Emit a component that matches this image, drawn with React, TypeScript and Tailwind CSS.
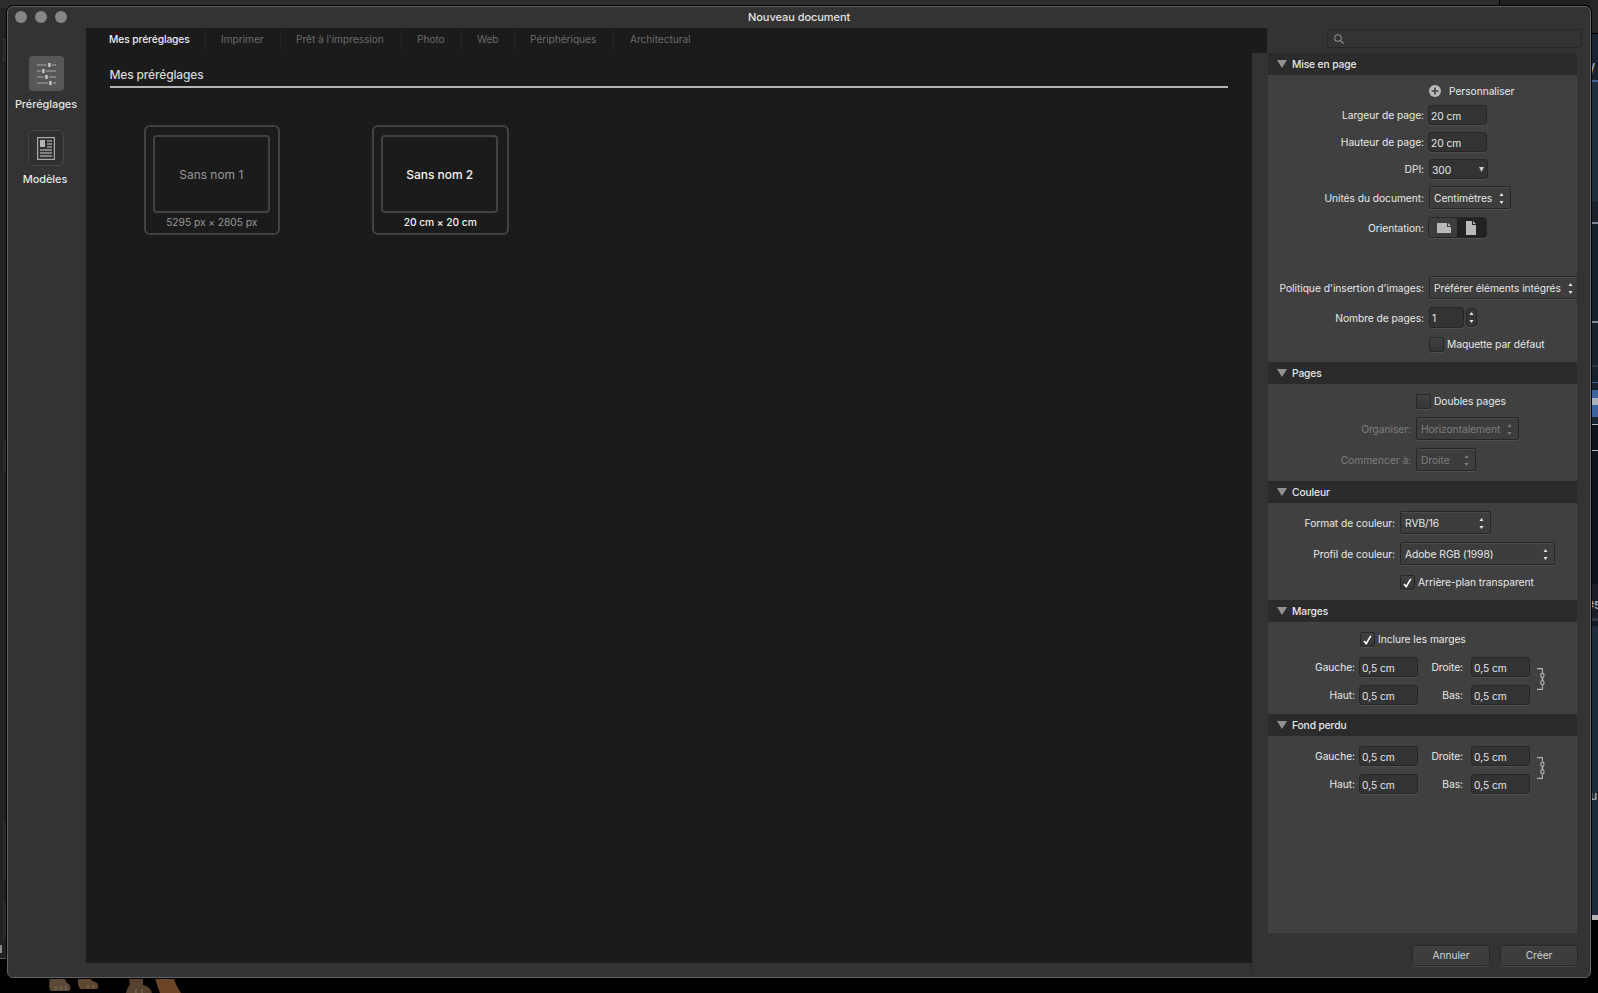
import type { ReactNode } from 'react';

const tabs = [
  { label: 'Mes préréglages', width: 'w-[97px]', pad: 'pl-0', active: true },
  { label: 'Imprimer', width: 'w-[75px]', pad: 'pl-[15px]' },
  { label: "Prêt à l'impression", width: 'w-[121px]', pad: 'pl-[15px]' },
  { label: 'Photo', width: 'w-[60px]', pad: 'pl-[15px]' },
  { label: 'Web', width: 'w-[53px]', pad: 'pl-[15px]' },
  { label: 'Périphériques', width: 'w-[99px]', pad: 'pl-[15px]' },
  { label: 'Architectural', width: 'w-[90px]', pad: 'pl-[16px]', last: true },
];

const presets = [
  { name: 'Sans nom 1', size: '5295 px × 2805 px', active: false },
  { name: 'Sans nom 2', size: '20 cm × 20 cm', active: true },
];

// slivers of the application behind the dialog
const rightSlivers = [
  { h: 'h-[33px]', c: 'bg-[#262626]' },
  { h: 'h-[1px]', c: 'bg-black' },
  { h: 'h-[46px]', c: 'bg-[#182430]' },
  { h: 'h-[2px]', c: 'bg-[#3b6299]' },
  { h: 'h-[120px]', c: 'bg-[#1f2d3b]' },
  { h: 'h-[20px]', c: 'bg-[#1a222c]' },
  { h: 'h-[2px]', c: 'bg-[#7b8796]' },
  { h: 'h-[97px]', c: 'bg-[#17212b]' },
  { h: 'h-[2px]', c: 'bg-[#7b8796]' },
  { h: 'h-[42px]', c: 'bg-[#18222c]' },
  { h: 'h-[2px]', c: 'bg-[#2c3744]' },
  { h: 'h-[15px]', c: 'bg-[#18222c]' },
  { h: 'h-[1px]', c: 'bg-[#3b6299]' },
  { h: 'h-[7px]', c: 'bg-[#18222c]' },
  { h: 'h-[8px]', c: 'bg-[#3b64a0]' },
  { h: 'h-[7px]', c: 'bg-[#a8b0bb]' },
  { h: 'h-[12px]', c: 'bg-[#3b64a0]' },
  { h: 'h-[7px]', c: 'bg-[#18222c]' },
  { h: 'h-[1px]', c: 'bg-[#b4b4b4]' },
  { h: 'h-[25px]', c: 'bg-[#0d131a]' },
  { h: 'h-[1px]', c: 'bg-[#b4b4b4]' },
  { h: 'h-[133px]', c: 'bg-[#0d131a]' },
  { h: 'h-[34px]', c: 'bg-[#1a1f27]' },
  { h: 'h-[3px]', c: 'bg-[#2c3744]' },
  { h: 'h-[5px]', c: 'bg-[#101820]' },
  { h: 'h-[289px]', c: 'bg-[#1e2b38]' },
  { h: 'h-[5px]', c: 'bg-[#b4b4b4]' },
];

function Section({ title, height, children }: { title: string; height: string; children?: ReactNode }) {
  return (
    <section className={`${height} shrink-0 overflow-hidden`}>
      <header className="flex h-[22px] items-center bg-[#2b2b2b] pl-[9px]">
        <svg width="10" height="8" viewBox="0 0 10 8">
          <path d="M0 0H10L5 8Z" fill="#929292" />
        </svg>
        <h3 className="ml-[5px] font-medium tracking-[-0.12px]">{title}</h3>
      </header>
      {children}
    </section>
  );
}

function Row({ label, labelWidth, className, muted, children }: { label?: string; labelWidth: string; className: string; muted?: boolean; children: ReactNode }) {
  return (
    <div className={`flex items-center ${className} ${muted ? 'text-[#7e7e7e]' : ''}`}>
      <div className={`${labelWidth} shrink-0 whitespace-nowrap text-right`}>{label}</div>
      {children}
    </div>
  );
}

const field = 'flex shrink-0 items-center rounded-[3px] border border-[#262626] bg-[#333333] shadow-[0_1px_0_#505050]';

function Field({ value, className = 'w-[59px]' }: { value: string; className?: string }) {
  return (
    <div className={`${field} ${className} h-5 pl-[2px]`}>
      <span className="pt-[2px]">{value}</span>
    </div>
  );
}

function Arrows({ className = '' }: { className?: string }) {
  return (
    <svg width="5" height="11" viewBox="0 0 5 11" fill="currentColor" className={`shrink-0 ${className}`}>
      <path d="M0.5 3L2.5 0L4.5 3ZM0.5 8L2.5 11L4.5 8Z" />
    </svg>
  );
}

function Select({ value, className }: { value: string; className: string }) {
  return (
    <div className={`flex h-[23px] shrink-0 items-center justify-between whitespace-nowrap rounded-[2px] border border-[#262626] bg-[#3d3d3d] pr-[6px] pl-[4px] shadow-[0_1px_0_#505050,inset_0_1px_0_#4b4b4b] ${className}`}>
      <span>{value}</span>
      <Arrows className="mt-px" />
    </div>
  );
}

function Checkbox({ label, checked }: { label: string; checked?: boolean }) {
  return (
    <div className="flex items-center gap-[3px] whitespace-nowrap">
      <div className="flex h-[15px] w-[15px] items-center justify-center rounded-[2px] border border-[#262626] bg-linear-to-b from-[#424242] to-[#343434] shadow-[0_1px_0_#505050]">
        {checked && (
          <svg width="9" height="10" viewBox="0 0 9 10" fill="none" stroke="#fff" strokeWidth="1.6">
            <path d="M1 6L3.2 8.6L7.8 0.8" />
          </svg>
        )}
      </div>
      <span className="pb-[2px]">{label}</span>
    </div>
  );
}

function Chain() {
  return (
    <svg width="8" height="22" viewBox="0 0 8 22" fill="none" stroke="#b4b4b4" strokeWidth="1.1" className="mb-1">
      <path d="M0 0.6H5.4V4.5M5.4 17.5V21.4H0" />
      <ellipse cx="5.4" cy="7.3" rx="1.6" ry="2.2" />
      <ellipse cx="5.4" cy="14.7" rx="1.6" ry="2.2" />
      <path d="M5.4 9.5V12.5" strokeWidth="1.6" />
    </svg>
  );
}

function Margins({ className }: { className: string }) {
  return (
    <div className={`flex items-center ${className}`}>
      <div className="grid shrink-0 grid-cols-[87px_59px_41px_70px] items-center gap-x-1 gap-y-2">
        <span className="text-right">Gauche:</span>
        <Field value="0,5 cm" />
        <span className="text-right">Droite:</span>
        <Field value="0,5 cm" className="ml-1 w-[59px]" />
        <span className="text-right">Haut:</span>
        <Field value="0,5 cm" />
        <span className="text-right">Bas:</span>
        <Field value="0,5 cm" className="ml-1 w-[59px]" />
      </div>
      <Chain />
    </div>
  );
}

function Sidebar() {
  return (
    <nav className="flex w-[78px] shrink-0 flex-col items-center pt-7 text-[11px] font-medium tracking-[-0.08px] text-[#e4e4e4]">
      <div className="mr-[2px] flex h-[35px] w-[35px] items-center justify-center rounded-[4px] bg-[#575757]">
        <svg width="19" height="22" viewBox="0 0 19 22">
          <path d="M0 2H19M0 8H19M0 14H19M0 20H19" stroke="#8f8f8f" strokeWidth="1.6" />
          <path d="M9.8 2H15M3.8 8H9M6.8 14H12M10.8 20H16" stroke="#575757" strokeWidth="2.4" />
          <path d="M12.4 0V4M6.4 6V10M9.4 12V16M13.4 18V22" stroke="#c9c9c9" strokeWidth="2.4" />
        </svg>
      </div>
      <span className="mt-[5px] mr-[2px] h-4 leading-4">Préréglages</span>
      <div className="mt-[18px] mr-[2px] flex h-9 w-9 items-center justify-center rounded-[5px] border border-[#484848] bg-[#303030]">
        <svg width="18" height="23" viewBox="0 0 18 23">
          <rect x="0.6" y="0.6" width="16.8" height="21.8" fill="none" stroke="#a9a9a9" strokeWidth="1.2" />
          <rect x="3" y="3" width="5" height="7" fill="#b4b4b4" />
          <path d="M10 4H15M10 7H15M10 10H15M3 13H15M3 16H15M3 19H15" stroke="#9b9b9b" strokeWidth="1.7" />
        </svg>
      </div>
      <span className="mt-[5px] mr-1 h-4 leading-4">Modèles</span>
    </nav>
  );
}

function Presets() {
  return (
    <main className="min-h-0 grow bg-[#1b1b1b] pt-[13px] pl-[23.5px]">
      <h2 className="h-5 w-[1118px] text-[12px] leading-[18px] font-medium tracking-[-0.15px] text-[#d6d6d6]">Mes préréglages</h2>
      <div className="h-[2px] w-[1118px] bg-[#b4b4b4]" />
      <div className="mt-[37px] ml-[34px] flex gap-[92px]">
        {presets.map((p) => (
          <div
            key={p.name}
            className={`flex h-[110px] w-[136.5px] flex-col items-center rounded-[6px] border-2 border-[#424242] ${p.active ? 'font-medium text-[#f2f2f2]' : 'text-[#989898]'}`}
          >
            <div className="mt-2 mr-px flex h-[78px] w-[117px] items-center justify-center rounded-[4px] border-2 border-[#424242] pt-px text-[12px] tracking-[-0.03px]">
              {p.name}
            </div>
            <div className="mt-px leading-4">{p.size}</div>
          </div>
        ))}
      </div>
    </main>
  );
}

function Settings() {
  return (
    <aside className="ml-4 flex h-[880px] w-[309px] flex-col overflow-hidden bg-[#404040] text-[#e8e8e8]">
      <Section title="Mise en page" height="h-[309px]">
        <div className="mt-[6px] ml-[161px] flex h-5 items-center">
          <svg width="12" height="12" viewBox="0 0 12 12">
            <circle cx="6" cy="6" r="6" fill="#b9b9b9" />
            <path d="M6 2.6V9.4M2.6 6H9.4" stroke="#404040" strokeWidth="1.6" />
          </svg>
          <span className="ml-2 pb-px">Personnaliser</span>
        </div>
        <Row label="Largeur de page:" labelWidth="w-[156px] mr-1" className="mt-1 h-5">
          <Field value="20 cm" />
        </Row>
        <Row label="Hauteur de page:" labelWidth="w-[156px] mr-1" className="mt-[7px] h-5">
          <Field value="20 cm" />
        </Row>
        <Row label="DPI:" labelWidth="w-[156px] mr-[5px]" className="mt-[7px] h-5">
          <div className={`${field} h-5 w-[59px] justify-between pr-[3px] pl-[2px]`}>
            <span className="pt-[2px]">300</span>
            <svg width="5" height="5" viewBox="0 0 5 5">
              <path d="M0 0H5L2.5 5Z" fill="#d0d0d0" />
            </svg>
          </div>
        </Row>
        <Row label="Unités du document:" labelWidth="w-[156px] mr-[5px]" className="mt-[7px] h-[23px]">
          <Select value="Centimètres" className="w-[82px]" />
        </Row>
        <Row label="Orientation:" labelWidth="w-[156px] mr-1" className="mt-2 h-[21px]">
          <div className="flex h-[21px] w-[59px] overflow-hidden rounded-[3px] border border-[#262626] shadow-[0_1px_0_#505050]">
            <div className="flex w-7 items-center justify-center bg-[#3d3d3d]">
              <svg width="14" height="10" viewBox="0 0 14 10" className="ml-[2px]">
                <path d="M0 0H10V4H14V10H0ZM11 0L14 3H11Z" fill="#b9b9b9" />
              </svg>
            </div>
            <div className="flex grow items-center bg-[#222222] pl-[9px]">
              <svg width="10" height="14" viewBox="0 0 10 14">
                <path d="M0 0H6V4H10V14H0ZM7 0L10 3H7Z" fill="#b9b9b9" />
              </svg>
            </div>
          </div>
        </Row>
        <Row label="Politique d'insertion d'images:" labelWidth="w-[156px] mr-[5px]" className="mt-[38px] h-[23px]">
          <Select value="Préférer éléments intégrés" className="w-[151px]" />
        </Row>
        <Row label="Nombre de pages:" labelWidth="w-[156px] mr-[5px]" className="mt-2 h-[21px]">
          <div className={`${field} h-[21px] w-[35px] pl-[2px]`}>1</div>
          <div className="ml-[2px] flex h-[19px] w-[11px] items-center justify-center rounded-[4px] border border-[#262626] bg-[#363636] shadow-[0_1px_0_#505050]">
            <Arrows />
          </div>
        </Row>
        <Row labelWidth="w-[156px] mr-[5px]" className="mt-[9px] h-[15px]">
          <Checkbox label="Maquette par défaut" />
        </Row>
      </Section>

      <Section title="Pages" height="h-[119px]">
        <Row labelWidth="w-[148px]" className="mt-[10px] h-[15px]">
          <Checkbox label="Doubles pages" />
        </Row>
        <Row label="Organiser:" labelWidth="w-[143px] mr-[5px]" className="mt-2 h-[23px]" muted>
          <Select value="Horizontalement" className="w-[103px]" />
        </Row>
        <Row label="Commencer à:" labelWidth="w-[143px] mr-[5px]" className="mt-2 h-[23px]" muted>
          <Select value="Droite" className="w-[60px]" />
        </Row>
      </Section>

      <Section title="Couleur" height="h-[119px]">
        <Row label="Format de couleur:" labelWidth="w-[127px] mr-[5px]" className="mt-2 h-[23px]">
          <Select value="RVB/16" className="w-[91px]" />
        </Row>
        <Row label="Profil de couleur:" labelWidth="w-[127px] mr-[5px]" className="mt-2 h-[23px]">
          <Select value="Adobe RGB (1998)" className="w-[155px]" />
        </Row>
        <Row labelWidth="w-[132px]" className="mt-[10px] h-[15px]">
          <Checkbox label="Arrière-plan transparent" checked />
        </Row>
      </Section>

      <Section title="Marges" height="h-[114px]">
        <Row labelWidth="w-[92px]" className="mt-[10px] h-[15px]">
          <Checkbox label="Inclure les marges" checked />
        </Row>
        <Margins className="mt-[10px]" />
      </Section>

      <Section title="Fond perdu" height="h-[219px]">
        <Margins className="mt-[10px]" />
      </Section>
    </aside>
  );
}

const button = 'flex h-[21px] w-[78px] items-center justify-center rounded-[3px] border border-[#262626] bg-[#3d3d3d] pb-px text-[#d0d0d0] shadow-[0_1px_0_#484848,inset_0_1px_0_#464646]';

export default function App() {
  return (
    <div className="relative h-[993px] w-[1598px] overflow-hidden bg-black font-[Inter,sans-serif] text-[10.25px] leading-4 tracking-[-0.05px]">
      <div className="absolute inset-x-0 top-0 flex h-2">
        <div className="w-[1500px] border-r border-black bg-[#2d2d2d]" />
        <div className="grow bg-[#202020]" />
      </div>
      <div className="absolute top-2 left-0 flex h-[951px] w-[7px] flex-col items-end border-b border-[#555555] bg-[#222222]">
        <div className="mt-[29px] h-[26px] w-1 border-y border-[#1a1a1a] bg-[#2c2c2c]" />
        <div className="mt-[378px] h-8 w-1 bg-[#2b2b2b]" />
        <div className="mt-[348px] h-[59px] w-1 bg-[#2b2b2b]" />
        <div className="mt-[22px] h-[37px] w-1 bg-[#2b2b2b]" />
      </div>
      <div className="absolute top-[945px] left-0 h-2 w-[2px] bg-[#8a8a8a]" />
      <div className="absolute top-0 right-0 flex w-[8px] flex-col">
        {rightSlivers.map((s, i) => (
          <div key={i} className={`${s.h} ${s.c}`} />
        ))}
      </div>
      <span className="absolute top-[60px] left-[1590px] text-[13px] font-semibold text-[#a8b0bb]">/</span>
      <span className="absolute top-[597px] left-[1587px] text-[11px] font-semibold text-[#a8b0bb]">#5</span>
      <span className="absolute top-[788px] left-[1590px] text-[12px] font-medium text-[#a8b0bb]">u</span>
      <svg className="absolute bottom-0 left-12" width="140" height="15" viewBox="0 0 140 15">
        <path d="M2 0H17Q17 4 21 6Q24 10 21 13H3Q0 12 2 0Z" fill="#5b4836" />
        <path d="M30 0H41Q44 3 49 5Q52 9 49 11L33 11Q29 9 30 0Z" fill="#5f4630" />
        <path d="M81 0H95V7Q102 8 104 15H78Q79 9 82 7Z" fill="#55412e" />
        <path d="M107 0H126Q127 6 133 15H112Q109 7 107 0Z" fill="#6b4526" />
        <path d="M8 8V12M13 8V12M18 8V12M40 7V10M45 7V10M88 11V15M94 11V15" stroke="#8d8272" strokeWidth="0.8" />
      </svg>

      <div className="absolute top-[6px] left-[7px] flex h-[972px] w-[1584px] flex-col overflow-hidden rounded-[6px] border border-[#636363] bg-[#333333] shadow-[0_0_0_1px_#000]">
        <header className="mb-px flex h-5 shrink-0 items-center pl-[7px]">
          <div className="flex gap-2">
            <span className="h-3 w-3 rounded-full bg-[#868686]" />
            <span className="h-3 w-3 rounded-full bg-[#868686]" />
            <span className="h-3 w-3 rounded-full bg-[#868686]" />
          </div>
          <h1 className="ml-[681px] text-[11px] font-medium text-[#e4e4e4]">Nouveau document</h1>
        </header>
        <div className="flex min-h-0 grow">
          <Sidebar />
          <div className="flex grow flex-col">
            <div className="flex h-[25px] shrink-0">
              <div className="flex w-[1181px] bg-[#1b1b1b] pt-[2px] pl-[23px] tracking-[-0.1px]">
                {tabs.map((t) => (
                  <div
                    key={t.label}
                    className={`flex h-5 shrink-0 items-center whitespace-nowrap pb-[2px] ${t.width} ${t.pad} ${t.last ? '' : 'border-r border-[#272727]'} ${t.active ? 'font-medium text-[#ececec]' : 'text-[#6a6a6a]'}`}
                  >
                    {t.label}
                  </div>
                ))}
              </div>
              <div className="mt-px ml-[60px] flex h-[19px] w-[255px] items-center rounded-[3px] border border-[#272727] pl-[6px]">
                <svg width="10" height="10" viewBox="0 0 10 10" fill="none" stroke="#8e8e8e" strokeWidth="1.1">
                  <circle cx="4" cy="4" r="3.3" />
                  <path d="M6.4 6.4L9.5 9.5" />
                </svg>
              </div>
            </div>
            <div className="flex h-[924px]">
              <div className="flex w-[1166px] shrink-0 flex-col">
                <Presets />
                <div className="h-[14px] shrink-0 border-r border-[#2a2a2a]" />
              </div>
              <div className="flex w-[338px] shrink-0 flex-col">
                <Settings />
                <div className="mt-3 ml-[160px] flex gap-[10px]">
                  <button className={button}>Annuler</button>
                  <button className={button}>Créer</button>
                </div>
              </div>
            </div>
          </div>
        </div>
      </div>
    </div>
  );
}
